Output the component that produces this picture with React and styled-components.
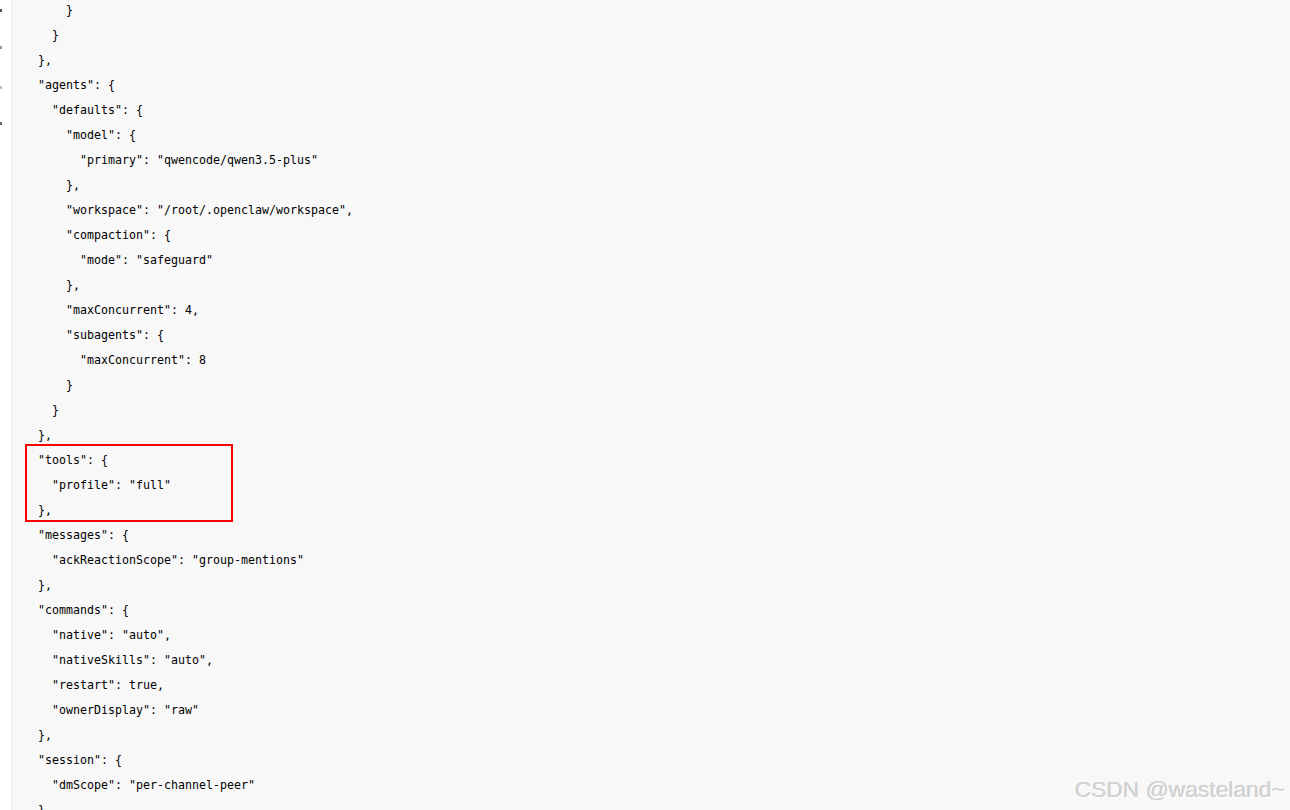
import React from 'react';
import styled, { createGlobalStyle } from 'styled-components';

const GlobalStyle = createGlobalStyle`
  html, body {
    margin: 0;
    padding: 0;
    background: #fff;
    overflow: hidden;
  }
`;

const Page = styled.div`
  display: flex;
  width: 1290px;
  height: 810px;
  position: relative;
  overflow: hidden;
`;

const Gutter = styled.div`
  width: 11px;
  flex-shrink: 0;
  background: #fff;
  border-right: 1px solid #eeeeee;
  display: flex;
  flex-direction: column;
  padding-top: 9px;
`;

const Mark = styled.span`
  display: block;
  width: 2px;
  height: 3px;
  margin-top: ${(p) => p.$top}px;
  background: ${(p) => p.$color};
`;

const CodeArea = styled.div`
  flex: 1;
  background: #f8f8f8;
  position: relative;
  padding-left: 12px;
`;

const Pre = styled.pre`
  margin: -2.5px 0 0;
  font-family: 'DejaVu Sans Mono', 'Liberation Mono', monospace;
  font-size: 11.63px;
  line-height: 25px;
  color: #000;
  white-space: pre;
`;

const Highlight = styled.div`
  position: absolute;
  left: 13px;
  top: 444px;
  width: 204px;
  height: 74px;
  border: 2px solid #f00;
  pointer-events: none;
`;

const Watermark = styled.div`
  position: absolute;
  right: 5px;
  bottom: 7px;
  font-family: 'Liberation Sans', Arial, sans-serif;
  font-size: 22.8px;
  color: #d2d2d2;
  text-shadow: 1px 1px 0 #fff, -0.5px -0.5px 0 #c4c4c4;
`;

const code = `      }
    }
  },
  "agents": {
    "defaults": {
      "model": {
        "primary": "qwencode/qwen3.5-plus"
      },
      "workspace": "/root/.openclaw/workspace",
      "compaction": {
        "mode": "safeguard"
      },
      "maxConcurrent": 4,
      "subagents": {
        "maxConcurrent": 8
      }
    }
  },
  "tools": {
    "profile": "full"
  },
  "messages": {
    "ackReactionScope": "group-mentions"
  },
  "commands": {
    "native": "auto",
    "nativeSkills": "auto",
    "restart": true,
    "ownerDisplay": "raw"
  },
  "session": {
    "dmScope": "per-channel-peer"
  }`;

export default function App() {
  return (
    <>
      <GlobalStyle />
      <Page>
        <Gutter>
          <Mark $top={0} $color="#555" />
          <Mark $top={34} $color="#999" />
          <Mark $top={37} $color="#bbb" />
          <Mark $top={33} $color="#666" />
        </Gutter>
        <CodeArea>
          <Pre>{code}</Pre>
          <Highlight />
        </CodeArea>
        <Watermark>CSDN @wasteland~</Watermark>
      </Page>
    </>
  );
}
